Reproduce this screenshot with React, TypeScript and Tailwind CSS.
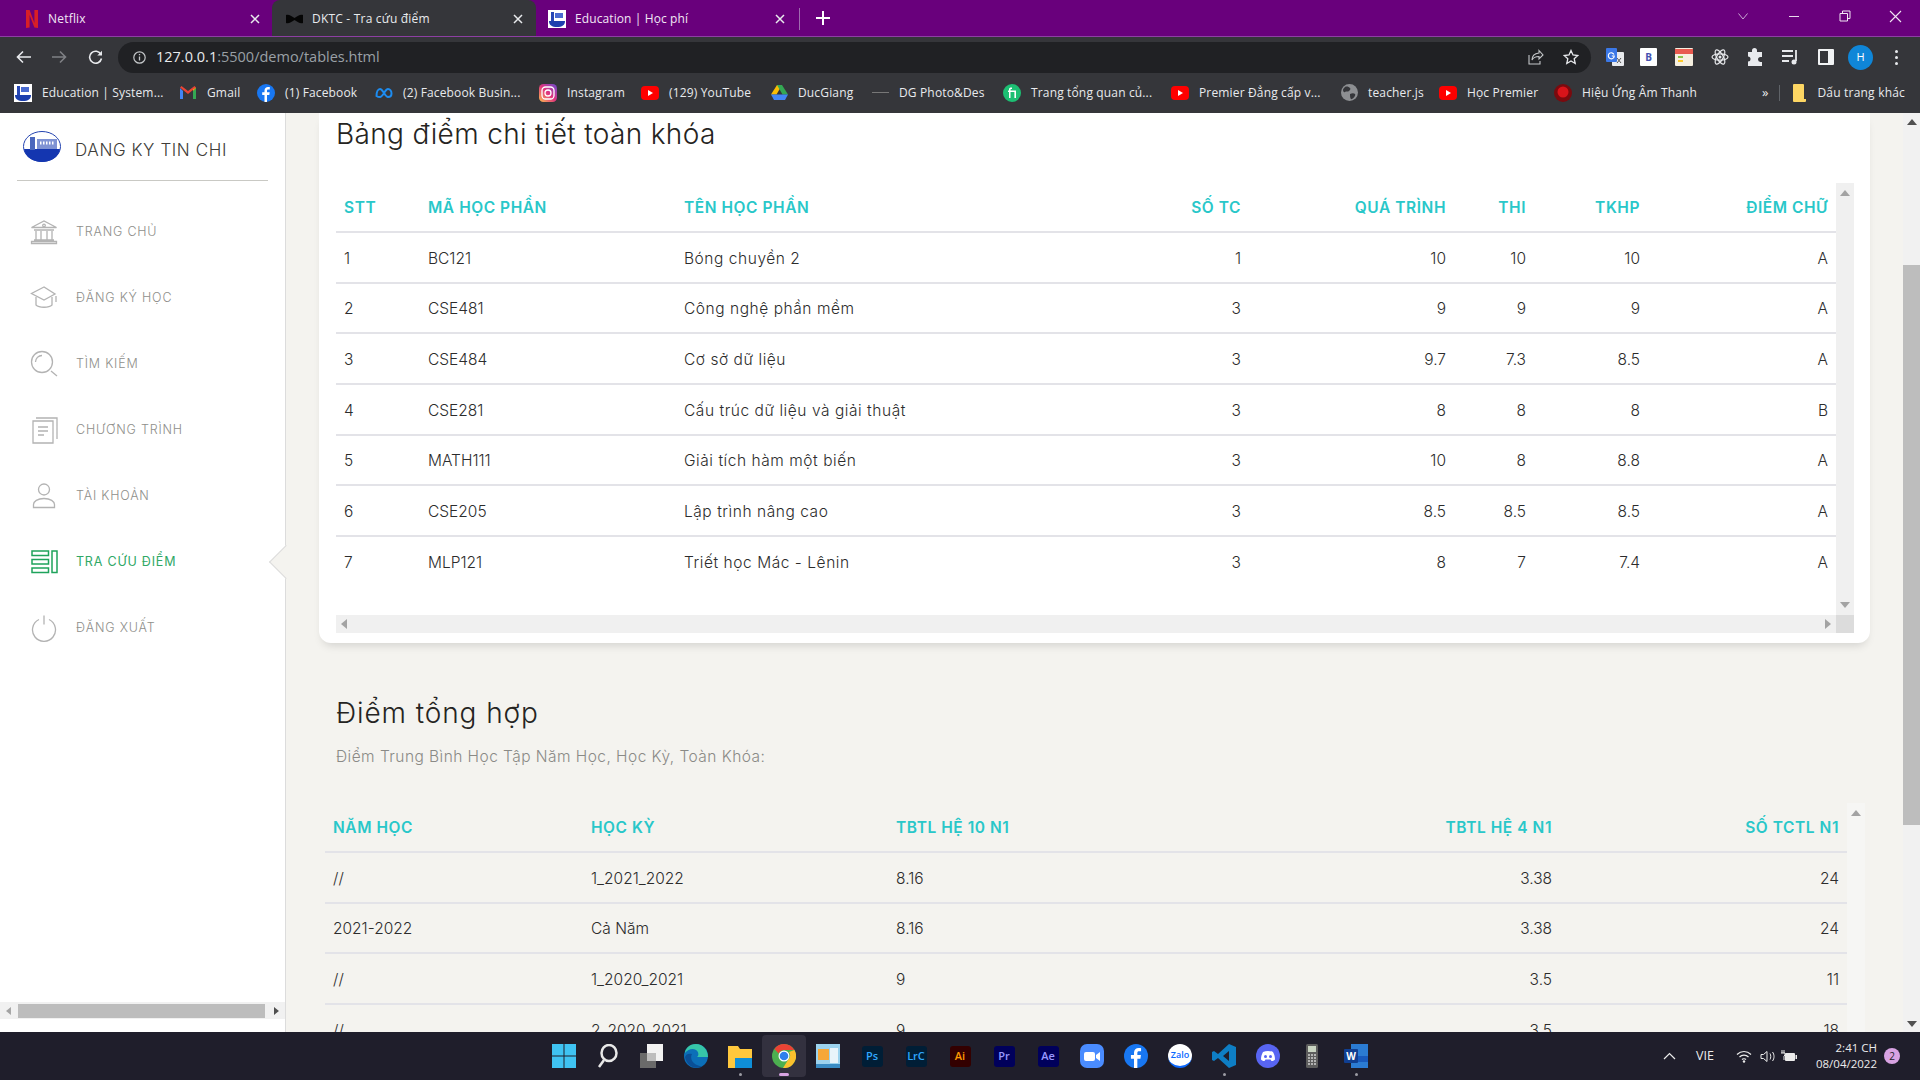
import React from "react";

const UI_FONT = "font-['Open_Sans','Noto_Sans',sans-serif]";
const PAGE_FONT = "font-['Inter','Noto_Sans',sans-serif]";

// --- small drawn icons ---
const NetflixIcon = () => (
  <svg width="12" height="18" viewBox="0 0 12 18">
    <path d="M0 0h3.6l4.8 13V0H12v18l-3.6-.6L3.6 5v12.6L0 18z" fill="#d81f26" />
  </svg>
);

const BowTieIcon = () => (
  <svg width="17" height="10" viewBox="0 0 17 10">
    <path d="M0 1c3-1 5 1 8.500 3C12 2 14 0 17 1v8c-3 1-5-1-8.500-3C5 8 3 10 0 9z" fill="#050505" />
  </svg>
);

const SchoolIcon = ({ size = 18 }: { size?: number }) => (
  <svg width={size} height={size} viewBox="0 0 18 18">
    <rect width="18" height="18" fill="#fff" />
    <rect x="3" y="2" width="3" height="9" fill="#2747b5" />
    <rect x="7" y="3" width="8" height="5" fill="#4a6bd0" />
    <path d="M1 11h16c0 4-3 6-8 6s-8-2-8-6z" fill="#1c3fae" />
  </svg>
);

const CloseX = ({ className = "" }: { className?: string }) => (
  <svg width="12" height="12" viewBox="0 0 12 12" className={className}>
    <path d="M2 2l8 8M10 2l-8 8" stroke="#e8eaed" strokeWidth="1.500" />
  </svg>
);

const GmailIcon = () => (
  <svg width="16" height="13" viewBox="0 0 16 13">
    <path d="M0 2v11h3V5z" fill="#4285f4" />
    <path d="M13 5v8h3V2z" fill="#34a853" />
    <path d="M0 1.500 8 8l8-6.500L14.500 0 8 5 1.500 0z" fill="#ea4335" />
    <path d="M13 3.500 16 1.500V2L13 5z" fill="#fbbc04" />
  </svg>
);

const FacebookIcon = ({ size = 18 }: { size?: number }) => (
  <svg width={size} height={size} viewBox="0 0 18 18">
    <circle cx="9" cy="9" r="9" fill="#1877f2" />
    <path d="M10 18v-7h2.300l.4-2.700H10V6.800c0-.8.3-1.300 1.400-1.300h1.400V3.100C12.400 3 11.700 3 11 3 9 3 7.500 4.200 7.500 6.500v1.800H5.200V11h2.300v7z" fill="#fff" />
  </svg>
);

const MetaIcon = () => (
  <svg width="18" height="12" viewBox="0 0 18 12" fill="none">
    <path d="M1.500 9c0-4 1.500-7 3.500-7 3 0 5 8 8 8 2 0 3.500-1 3.500-3.500C16.500 4 15 2 13 2c-3 0-5 8-8 8-2 0-3.500-1-3.500-1z" stroke="#1d8cf0" strokeWidth="2" />
  </svg>
);

const InstagramIcon = () => (
  <svg width="18" height="18" viewBox="0 0 18 18" fill="none">
    <defs>
      <linearGradient id="ig" x1="0" y1="1" x2="1" y2="0">
        <stop offset="0" stopColor="#fdc04f" />
        <stop offset="0.5" stopColor="#e0337d" />
        <stop offset="1" stopColor="#6a4bd2" />
      </linearGradient>
    </defs>
    <rect width="18" height="18" rx="4.500" fill="url(#ig)" />
    <rect x="3" y="3" width="12" height="12" rx="3.500" stroke="#fff" strokeWidth="1.300" />
    <circle cx="9" cy="9" r="3" stroke="#fff" strokeWidth="1.300" />
  </svg>
);

const YoutubeIcon = () => (
  <svg width="18" height="14" viewBox="0 0 18 14">
    <rect width="18" height="14" rx="4" fill="#f00" />
    <path d="M7 4l5 3-5 3z" fill="#fff" />
  </svg>
);

const DriveIcon = () => (
  <svg width="17" height="15" viewBox="0 0 17 15">
    <path d="M6 0h5l-5.500 9.500H0z" fill="#fbbc04" />
    <path d="M11 0l6 9.500h-5.500L6 0z" fill="#34a853" />
    <path d="M0 9.500 3 15h11l3-5.500z" fill="#4285f4" />
  </svg>
);

const FiverrIcon = () => (
  <svg width="18" height="18" viewBox="0 0 18 18">
    <circle cx="9" cy="9" r="9" fill="#1dbf73" />
    <path d="M6 14V8H5V6.500h1V5.500C6 4 7 3.500 8.500 3.500H9V5h-.5c-.7 0-1 .2-1 .8v.7H13V14h-1.600V8H7.500v6z" fill="#fff" />
  </svg>
);

const GlobeIcon = () => (
  <svg width="17" height="17" viewBox="0 0 17 17">
    <circle cx="8.500" cy="8.500" r="8.500" fill="#8d8f92" />
    <path d="M4 3c2-1 4 0 5 1s0 2-1 3-3 0-4 1-2-1-2-2 1-2 2-3zM9 10c2-1 4-1 5 0s-1 4-3 5-2-4-2-5z" fill="#35363a" />
  </svg>
);

const RedDiscIcon = () => (
  <svg width="18" height="18" viewBox="0 0 18 18">
    <circle cx="9" cy="9" r="9" fill="#7b0a0e" />
    <circle cx="9" cy="8" r="5.500" fill="#d8141a" />
  </svg>
);

const FolderIcon = () => (
  <svg width="13" height="18" viewBox="0 0 13 18">
    <path d="M0 1a1 1 0 011-1h9a1 1 0 011 1v14l2 0v2a1 1 0 01-1 1H1a1 1 0 01-1-1z" fill="#fdd663" />
  </svg>
);

// --- bookmarks ---
const BOOKMARKS = [
  { icon: <SchoolIcon />, label: "Education | System...", cls: "ml-[14px] w-[165px]" },
  { icon: <GmailIcon />, label: "Gmail", cls: "w-[78px]" },
  { icon: <FacebookIcon />, label: "(1) Facebook", cls: "w-[118px]" },
  { icon: <MetaIcon />, label: "(2) Facebook Busin...", cls: "w-[164px]" },
  { icon: <InstagramIcon />, label: "Instagram", cls: "w-[102px]" },
  { icon: <YoutubeIcon />, label: "(129) YouTube", cls: "w-[129px]" },
  { icon: <DriveIcon />, label: "DucGiang", cls: "w-[101px]" },
  { icon: <span className="block h-px w-[17px] bg-[#777]" />, label: "DG Photo&Des", cls: "w-[132px]" },
  { icon: <FiverrIcon />, label: "Trang tổng quan củ...", cls: "w-[168px]" },
  { icon: <YoutubeIcon />, label: "Premier Đẳng cấp v...", cls: "w-[169px]" },
  { icon: <GlobeIcon />, label: "teacher.js", cls: "w-[99px]" },
  { icon: <YoutubeIcon />, label: "Học Premier", cls: "w-[115px]" },
  { icon: <RedDiscIcon />, label: "Hiệu Ứng Âm Thanh", cls: "w-[208px]" },
];

const Bookmark = ({ icon, label, cls }: { icon: React.ReactNode; label: string; cls: string }) => (
  <div className={`flex shrink-0 items-center ${cls}`}>
    <div className="flex w-[18px] shrink-0 justify-center">{icon}</div>
    <span className="ml-[10px] whitespace-nowrap text-[12px] tracking-[0.15px] text-[#e8eaed]">{label}</span>
  </div>
);

// --- browser chrome ---
const TabBar = () => (
  <div className={`flex h-[37px] items-end border-b border-[#8d3fa3] bg-[#69007c] ${UI_FONT}`}>
    <div className="flex h-[36px] w-[272px] items-center pl-[26px] pt-[1px]">
      <NetflixIcon />
      <span className="ml-[10px] text-[12px] tracking-[0.2px] text-[#f1e6f4]">Netflix</span>
      <CloseX className="ml-auto mr-[11px]" />
    </div>
    <div className="flex h-[36px] w-[264px] items-center rounded-t-[8px] bg-[#35363a] pl-[14px] pt-[1px]">
      <BowTieIcon />
      <span className="ml-[9px] text-[12px] tracking-[0.2px] text-[#e8eaed]">DKTC - Tra cứu điểm</span>
      <CloseX className="ml-auto mr-[12px]" />
    </div>
    <div className="flex h-[36px] w-[264px] items-center pl-[12px] pt-[1px]">
      <SchoolIcon />
      <span className="ml-[9px] text-[12px] tracking-[0.1px] text-[#f1e6f4]">Education | Học phí</span>
      <CloseX className="ml-auto mr-[13px]" />
      <div className="h-[22px] w-px bg-[#a06cb0]" />
    </div>
    <div className="flex h-[36px] items-center pl-[16px]">
      <svg width="14" height="14" viewBox="0 0 14 14">
        <path d="M7 0v14M0 7h14" stroke="#fff" strokeWidth="2" />
      </svg>
    </div>
    <div className="ml-auto flex h-[36px] items-center pb-[4px]">
      <svg width="10" height="7" viewBox="0 0 10 7" fill="none">
        <path d="M.5.500 5 6 9.500.500" stroke="#c9a6d2" />
      </svg>
      <div className="ml-[41px] h-px w-[10px] bg-[#e8d8ec]" />
      <svg width="12" height="12" viewBox="0 0 12 12" fill="none" className="ml-[40px]">
        <path d="M1 3.500h7.500V11H1zM3.500 3.500V1H11v7.500H8.500" stroke="#f1e6f4" />
      </svg>
      <svg width="13" height="13" viewBox="0 0 13 13" className="ml-[38px] mr-[18px]">
        <path d="M1 1l11 11M12 1 1 12" stroke="#f1e6f4" strokeWidth="1.100" />
      </svg>
    </div>
  </div>
);

const ToolbarGlyph = ({ children, cls }: { children: React.ReactNode; cls: string }) => (
  <div className={`flex shrink-0 items-center justify-center ${cls}`}>{children}</div>
);

const Toolbar = () => (
  <div className={`flex h-[40px] items-center bg-[#35363a] ${UI_FONT}`}>
    <ToolbarGlyph cls="w-[46px] pl-[1px]">
      <svg width="16" height="14" viewBox="0 0 16 14" fill="none">
        <path d="M15 7H2M7 1.500 1.500 7 7 12.500" stroke="#e8eaed" strokeWidth="1.600" />
      </svg>
    </ToolbarGlyph>
    <ToolbarGlyph cls="w-[26px]">
      <svg width="16" height="14" viewBox="0 0 16 14" fill="none">
        <path d="M1 7h13M9 1.500 14.500 7 9 12.500" stroke="#7f8185" strokeWidth="1.600" />
      </svg>
    </ToolbarGlyph>
    <ToolbarGlyph cls="w-[46px]">
      <svg width="15" height="15" viewBox="0 0 15 15" fill="none">
        <path d="M13 4.500A6 6 0 1 0 13.500 8.500" stroke="#e8eaed" strokeWidth="1.600" />
        <path d="M14 .800V5.500H9.300z" fill="#e8eaed" />
      </svg>
    </ToolbarGlyph>
    <div className="flex h-[31px] w-[1473px] shrink-0 items-center rounded-full bg-[#202124] pl-[15px]">
      <svg width="13" height="13" viewBox="0 0 13 13" fill="none">
        <circle cx="6.500" cy="6.500" r="5.700" stroke="#c4c7c9" strokeWidth="1.200" />
        <path d="M6.500 5.500v4M6.500 3v1.300" stroke="#c4c7c9" strokeWidth="1.300" />
      </svg>
      <span className="ml-[10px] text-[14.500px] tracking-[0px] text-[#e8eaed]">
        127.0.0.1<span className="text-[#9aa0a6]">:5500/demo/tables.html</span>
      </span>
      <svg width="16" height="16" viewBox="0 0 16 16" fill="none" className="ml-auto">
        <path d="M11 1.500 15 6l-4 4V7.500C7 7.500 5 9 4 11c0-4 3-6.500 7-7zM1 6v9h11v-3" stroke="#c4c7c9" strokeWidth="1.100" />
      </svg>
      <svg width="16" height="16" viewBox="0 0 16 16" fill="none" className="ml-[19px] mr-[12px]">
        <path d="M8 1.500 10 6l4.800.5-3.600 3.200 1 4.800L8 12l-4.200 2.500 1-4.800L1.200 6.500 6 6z" stroke="#e8eaed" strokeWidth="1.300" />
      </svg>
    </div>
    <div className="ml-[15px] flex items-center">
      {/* translate */}
      <svg width="18" height="18" viewBox="0 0 18 18" className="shrink-0">
        <rect x="6" y="4" width="12" height="14" rx="1" fill="#e8eaed" />
        <rect width="11" height="14" rx="1" fill="#3b78e7" />
        <path d="M8 6.500A3 3 0 1 0 8.300 8H5.800" stroke="#fff" strokeWidth="1.100" fill="none" />
        <path d="M11 10l4 5M15 10l-4 5" stroke="#555" strokeWidth="1" />
      </svg>
      {/* B page */}
      <div className="ml-[16px] flex h-[18px] w-[17px] shrink-0 items-center justify-center rounded-[1px] bg-white text-[10px] font-bold text-[#4450b0]">B</div>
      {/* note */}
      <svg width="18" height="18" viewBox="0 0 18 18" className="ml-[18px] shrink-0">
        <rect width="18" height="18" rx="1" fill="#f6efe0" />
        <rect width="18" height="5" y="1" fill="#e85a4f" />
        <rect x="3" y="8" width="5" height="2" fill="#8bc34a" />
        <rect x="3" y="12" width="5" height="2" fill="#ffca28" />
      </svg>
      {/* atom */}
      <svg width="18" height="18" viewBox="0 0 18 18" fill="none" className="ml-[18px] shrink-0">
        <g stroke="#e8eaed" strokeWidth="1.200">
          <ellipse cx="9" cy="9" rx="8" ry="3.200" />
          <ellipse cx="9" cy="9" rx="8" ry="3.200" transform="rotate(60 9 9)" />
          <ellipse cx="9" cy="9" rx="8" ry="3.200" transform="rotate(120 9 9)" />
        </g>
        <circle cx="9" cy="9" r="1.500" fill="#e8eaed" />
      </svg>
      {/* puzzle */}
      <svg width="18" height="18" viewBox="0 0 18 18" className="ml-[17px] shrink-0">
        <path d="M6 2.500a2.500 2.500 0 015 0V4h5v5h-1.500a2.500 2.500 0 000 5H16v4H2v-4.500a2.500 2.500 0 000-5V4h4z" fill="#e8eaed" />
      </svg>
      {/* playlist */}
      <svg width="18" height="16" viewBox="0 0 18 16" fill="none" className="ml-[18px] shrink-0">
        <path d="M0 2h11M0 7h11M0 12h7" stroke="#e8eaed" strokeWidth="1.800" />
        <path d="M14 1v11" stroke="#e8eaed" strokeWidth="1.800" />
        <circle cx="12" cy="13" r="2.500" fill="#e8eaed" />
      </svg>
      {/* side panel */}
      <div className="ml-[18px] h-[16px] w-[16px] shrink-0 rounded-[1px] border-[2px] border-r-[6px] border-[#f1f3f4]" />
      <div className="ml-[14px] flex h-[25px] w-[25px] shrink-0 items-center justify-center rounded-full bg-[#0f86d8] text-[11px] text-white">H</div>
      <div className="ml-[22px] flex shrink-0 flex-col gap-[3px]">
        <span className="block h-[3px] w-[3px] rounded-full bg-[#e8eaed]" />
        <span className="block h-[3px] w-[3px] rounded-full bg-[#e8eaed]" />
        <span className="block h-[3px] w-[3px] rounded-full bg-[#e8eaed]" />
      </div>
    </div>
  </div>
);

const BookmarkBar = () => (
  <div className={`flex h-[36px] items-center bg-[#35363a] pb-[5px] ${UI_FONT}`}>
    {BOOKMARKS.map((b) => (
      <Bookmark key={b.label} {...b} />
    ))}
    <span className="text-[13px] text-[#e8eaed]">»</span>
    <div className="ml-[11px] h-[16px] w-px bg-[#5f6368]" />
    <div className="ml-[13px] flex items-center">
      <FolderIcon />
      <span className="ml-[11px] whitespace-nowrap text-[12px] tracking-[0.2px] text-[#e8eaed]">Dấu trang khác</span>
    </div>
  </div>
);

// --- sidebar ---
const iconCls = "h-[28px] w-[28px] shrink-0 fill-none stroke-[#b3b3b3] stroke-[1.3]";

const NAV = [
  {
    label: "TRANG CHỦ",
    icon: (
      <svg viewBox="0 0 28 28" className={iconCls}>
        <path d="M1.500 9.500 14 3l12.500 6.500zM4 12h20M4 22h20M1.500 25.500h25v-2h-25zM6 13v9M11 13v9M17 13v9M22 13v9" />
        <circle cx="14" cy="7.500" r="1.300" />
      </svg>
    ),
  },
  {
    label: "ĐĂNG KÝ HỌC",
    icon: (
      <svg viewBox="0 0 28 28" className={iconCls}>
        <path d="M14 3 1.500 9.500 14 16l11-6zM6 13v8c3 3 13 3 16 0v-8M26 12v6" />
      </svg>
    ),
  },
  {
    label: "TÌM KIẾM",
    icon: (
      <svg viewBox="0 0 28 28" className={iconCls}>
        <circle cx="12" cy="12" r="10.500" />
        <path d="M5.500 12a6.500 6.500 0 016.500-6.500M21 21l6 5" />
      </svg>
    ),
  },
  {
    label: "CHƯƠNG TRÌNH",
    icon: (
      <svg viewBox="0 0 28 28" className={iconCls}>
        <path d="M3 5h20v22H3zM6 2h21v21M8 11h10M8 15h10M8 19h6" />
      </svg>
    ),
  },
  {
    label: "TÀI KHOẢN",
    icon: (
      <svg viewBox="0 0 28 28" className={iconCls}>
        <circle cx="14" cy="7.500" r="5.500" />
        <path d="M3.500 25.500v-3c0-3 4-6 10.500-6s10.500 3 10.500 6v3z" />
      </svg>
    ),
  },
  {
    label: "TRA CỨU ĐIỂM",
    active: true,
    icon: (
      <svg viewBox="0 0 28 28" className="h-[28px] w-[28px] shrink-0 fill-none stroke-[#1fa35b] stroke-[1.5]">
        <path d="M2 3h16.500v4.500H2zM2 11.500h16.500v4.500H2zM2 20h16.500v4.500H2zM22 3h5v21.500h-5z" />
      </svg>
    ),
  },
  {
    label: "ĐĂNG XUẤT",
    icon: (
      <svg viewBox="0 0 28 28" className={iconCls}>
        <path d="M9 5.500a11.500 11.500 0 1010 0M14 1.500v9" />
      </svg>
    ),
  },
];

const Sidebar = () => (
  <aside className={`relative flex w-[286px] shrink-0 flex-col border-r border-[#dcdcdc] bg-white ${PAGE_FONT}`}>
    <div className="mx-[17px] flex h-[68px] items-center border-b border-[#c9c9c4] pl-[6px]">
      <svg width="38" height="31" viewBox="0 0 38 31">
        <ellipse cx="19" cy="15.500" rx="18.500" ry="15" fill="#fff" stroke="#2343b0" strokeWidth="1" />
        <path d="M1 18h36c-1 8-9 13-18 13S2 26 1 18z" fill="#1436b0" />
        <rect x="7" y="6" width="5" height="13" fill="#4b67bd" />
        <rect x="14" y="8" width="20" height="10" fill="#7f93d4" />
        <path d="M17 12h14" stroke="#fff" strokeDasharray="1.500 1.500" strokeWidth="3" />
      </svg>
      <span className="ml-[14px] mt-[8px] whitespace-nowrap text-[17px] font-light tracking-[0.6px] text-[#403d39]">DANG KY TIN CHI</span>
    </div>
    <nav className="flex flex-col pt-[18px]">
      {NAV.map((item) => (
        <div key={item.label} className="relative flex h-[66px] items-center pl-[30px]">
          {item.icon}
          <span className={`ml-[18px] text-[12.500px] font-light tracking-[0.8px] ${item.active ? "font-normal text-[#2fa866]" : "text-[#8f8f8b]"}`}>
            {item.label}
          </span>
          {item.active && (
            <div className="absolute right-[-1px] top-1/2 h-[24px] w-[24px] -translate-y-1/2 translate-x-[12px] rotate-45 border-b border-l border-[#dcdcdc] bg-[#f4f3ef]" />
          )}
        </div>
      ))}
    </nav>
    {/* sidebar horizontal scrollbar */}
    <div className="mt-auto mb-[13px] flex h-[17px] items-center bg-[#f1f1f1]">
      <svg width="18" height="10" viewBox="0 0 18 10"><path d="M11 1v8L6 5z" fill="#a3a3a3" /></svg>
      <div className="h-[14px] w-[248px] bg-[#bdbdbd]" />
      <svg width="20" height="10" viewBox="0 0 20 10"><path d="M9 1v8l5-4z" fill="#505050" /></svg>
    </div>
  </aside>
);

// --- tables ---
const GRADES = [
  ["1", "BC121", "Bóng chuyền 2", "1", "10", "10", "10", "A"],
  ["2", "CSE481", "Công nghệ phần mềm", "3", "9", "9", "9", "A"],
  ["3", "CSE484", "Cơ sở dữ liệu", "3", "9.7", "7.3", "8.5", "A"],
  ["4", "CSE281", "Cấu trúc dữ liệu và giải thuật", "3", "8", "8", "8", "B"],
  ["5", "MATH111", "Giải tích hàm một biến", "3", "10", "8", "8.8", "A"],
  ["6", "CSE205", "Lập trình nâng cao", "3", "8.5", "8.5", "8.5", "A"],
  ["7", "MLP121", "Triết học Mác - Lênin", "3", "8", "7", "7.4", "A"],
];

const SUMMARY = [
  ["//", "1_2021_2022", "8.16", "3.38", "24"],
  ["2021-2022", "Cả Năm", "8.16", "3.38", "24"],
  ["//", "1_2020_2021", "9", "3.5", "11"],
  ["//", "2_2020_2021", "9", "3.5", "18"],
];

const thCls = "h-[49px] whitespace-nowrap px-2 pt-[1px] align-middle text-[15.500px] font-semibold tracking-[0.55px] text-[#29c7c9] border-b-2 border-[#e3e3e8]";
const tdCls = "h-[50.670px] whitespace-nowrap px-2 pt-[2px] align-middle text-[15.500px] font-light text-[#2c2c2c]";

const ArrowUp = ({ cls = "fill-[#a3a3a3]" }: { cls?: string }) => (
  <svg width="10" height="6" viewBox="0 0 10 6" className={cls}><path d="M0 6 5 0l5 6z" /></svg>
);
const ArrowDown = ({ cls = "fill-[#a3a3a3]" }: { cls?: string }) => (
  <svg width="10" height="6" viewBox="0 0 10 6" className={cls}><path d="M0 0l5 6 5-6z" /></svg>
);

const GradeCard = () => (
  <section className="rounded-b-[12px] bg-white pl-[17px] pr-[16px] pb-[10px] shadow-[0_6px_10px_-4px_rgba(0,0,0,0.15)]">
    <h2 className="pt-[2px] h-[70px] text-[28px] font-light leading-[38px] tracking-[0.35px] text-[#252422]">Bảng điểm chi tiết toàn khóa</h2>
    <div className="grid grid-cols-[1500px_18px] grid-rows-[432px_18px]">
      <table className="w-[1500px] table-fixed self-start border-collapse">
        <colgroup>
          <col className="w-[84px]" />
          <col className="w-[256px]" />
          <col className="w-[400px]" />
          <col className="w-[173px]" />
          <col className="w-[205px]" />
          <col className="w-[80px]" />
          <col className="w-[114px]" />
          <col className="w-[188px]" />
        </colgroup>
        <thead>
          <tr>
            <th className={`${thCls} text-left`}>STT</th>
            <th className={`${thCls} text-left`}>MÃ HỌC PHẦN</th>
            <th className={`${thCls} text-left`}>TÊN HỌC PHẦN</th>
            <th className={`${thCls} text-right`}>SỐ TC</th>
            <th className={`${thCls} text-right`}>QUÁ TRÌNH</th>
            <th className={`${thCls} text-right`}>THI</th>
            <th className={`${thCls} text-right`}>TKHP</th>
            <th className={`${thCls} text-right`}>ĐIỂM CHỮ</th>
          </tr>
        </thead>
        <tbody>
          {GRADES.map((r, i) => (
            <tr key={r[0]} className={i < GRADES.length - 1 ? "border-b-2 border-[#e3e3e8]" : ""}>
              {r.map((c, j) => (
                <td key={j} className={`${tdCls} ${j === 2 ? "tracking-[0.55px]" : ""} ${j > 2 ? "text-right" : "text-left"}`}>
                  {c}
                </td>
              ))}
            </tr>
          ))}
        </tbody>
      </table>
      <div className="flex flex-col items-center justify-between bg-[#f0f0f0] py-[7px]">
        <ArrowUp />
        <ArrowDown />
      </div>
      <div className="flex items-center justify-between bg-[#f0f0f0] px-[5px]">
        <svg width="6" height="10" viewBox="0 0 6 10" className="fill-[#a3a3a3]"><path d="M6 0v10L0 5z" /></svg>
        <svg width="6" height="10" viewBox="0 0 6 10" className="fill-[#a3a3a3]"><path d="M0 0v10l6-5z" /></svg>
      </div>
      <div className="bg-[#dcdcdc]" />
    </div>
  </section>
);

const SummarySection = () => (
  <section className="ml-[6px] mt-[49px]">
    <div className="pl-[11px]">
      <h2 className="h-[42px] text-[28px] font-light leading-[42px] tracking-[0.9px] text-[#252422]">Điểm tổng hợp</h2>
      <p className="mt-[11px] h-[24px] text-[15.500px] font-light leading-[24px] tracking-[0.45px] text-[#8a8a86]">
        Điểm Trung Bình Học Tập Năm Học, Học Kỳ, Toàn Khóa:
      </p>
    </div>
    <div className="mt-[34px] grid grid-cols-[1522px_18px]">
      <table className="w-[1522px] table-fixed self-start border-collapse">
        <colgroup>
          <col className="w-[258px]" />
          <col className="w-[305px]" />
          <col className="w-[300px]" />
          <col className="w-[372px]" />
          <col className="w-[287px]" />
        </colgroup>
        <thead>
          <tr>
            <th className={`${thCls} text-left`}>NĂM HỌC</th>
            <th className={`${thCls} text-left`}>HỌC KỲ</th>
            <th className={`${thCls} text-left`}>TBTL HỆ 10 N1</th>
            <th className={`${thCls} text-right`}>TBTL HỆ 4 N1</th>
            <th className={`${thCls} text-right`}>SỐ TCTL N1</th>
          </tr>
        </thead>
        <tbody>
          {SUMMARY.map((r, i) => (
            <tr key={i} className="border-b-2 border-[#e3e3e8]">
              {r.map((c, j) => (
                <td key={j} className={`${tdCls} ${j > 2 ? "text-right" : "text-left"}`}>
                  {c}
                </td>
              ))}
            </tr>
          ))}
        </tbody>
      </table>
      <div className="flex flex-col items-center bg-[#f6f6f4] pt-[7px]">
        <ArrowUp />
      </div>
    </div>
  </section>
);

const PageScrollbar = () => (
  <div className="flex w-[17px] shrink-0 flex-col items-center bg-[#f1f1f1]">
    <div className="flex h-[17px] w-full items-center justify-center">
      <ArrowUp cls="fill-[#505050]" />
    </div>
    <div className="mt-[135px] h-[560px] w-full bg-[#bdbdbd]" />
    <div className="mt-auto flex h-[17px] w-full items-center justify-center">
      <ArrowDown cls="fill-[#505050]" />
    </div>
  </div>
);

// --- taskbar ---
const Tile = ({ bg, fg, text }: { bg: string; fg: string; text: string }) => (
  <div className={`flex h-[21px] w-[21px] items-center justify-center rounded-[3px] text-[11px] font-semibold ${bg} ${fg}`}>{text}</div>
);

const TASK_ICONS: { key: string; node: React.ReactNode; dot?: boolean; active?: boolean }[] = [
  {
    key: "win",
    node: (
      <svg width="24" height="24" viewBox="0 0 24 24" className="fill-[#3fc3f2]">
        <rect width="11.500" height="11.500" />
        <rect x="12.500" width="11.500" height="11.500" />
        <rect y="12.500" width="11.500" height="11.500" />
        <rect x="12.500" y="12.500" width="11.500" height="11.500" />
      </svg>
    ),
  },
  {
    key: "search",
    node: (
      <svg width="22" height="24" viewBox="0 0 22 24" fill="none">
        <ellipse cx="12" cy="9" rx="7.500" ry="8" stroke="#e8e8e8" strokeWidth="2.500" />
        <path d="M7 16 2 23" stroke="#e8e8e8" strokeWidth="2.500" />
      </svg>
    ),
  },
  {
    key: "view",
    node: (
      <svg width="24" height="24" viewBox="0 0 24 24">
        <rect x="0" y="9" width="16" height="15" fill="#6a6a6a" />
        <rect x="7" y="0" width="16" height="17" fill="#f2f2f2" />
        <rect x="7" y="9" width="9" height="8" fill="#bdbdbd" />
      </svg>
    ),
  },
  {
    key: "edge",
    node: (
      <svg width="24" height="24" viewBox="0 0 24 24">
        <circle cx="12" cy="12" r="12" fill="#0c6fb8" />
        <path d="M24 13c0-7-5-13-12-13S1 5 1 9c3-4 8-5 11-3s3 6 1 7h11z" fill="#37c6a8" />
        <path d="M8 10c-3 5 2 12 10 12-6 4-15 1-17-9 1-3 4-4 7-3z" fill="#0a4f96" />
      </svg>
    ),
  },
  {
    key: "files",
    dot: true,
    node: (
      <svg width="24" height="24" viewBox="0 0 24 24">
        <path d="M0 2h10l2 3h12v19H0z" fill="#ffc83d" />
        <rect x="7" y="14" width="17" height="10" fill="#0f8fd8" />
      </svg>
    ),
  },
  {
    key: "chrome",
    active: true,
    node: (
      <svg width="24" height="24" viewBox="0 0 24 24">
        <circle cx="12" cy="12" r="12" fill="#4caf50" />
        <path d="M12 0a12 12 0 0110.400 6H12a6 6 0 00-5.400 3.500L2.400 5A12 12 0 0112 0z" fill="#ea4335" />
        <path d="M22.400 6A12 12 0 0111 24l5.300-8.500A6 6 0 0017 8z" fill="#fbc02d" />
        <circle cx="12" cy="12" r="5.500" fill="#fff" />
        <circle cx="12" cy="12" r="4.300" fill="#2f80ed" />
      </svg>
    ),
  },
  {
    key: "monitor",
    node: (
      <svg width="24" height="24" viewBox="0 0 24 24">
        <rect width="24" height="24" fill="#9cd3ee" />
        <rect x="2" y="5" width="11" height="11" fill="#f7a738" />
        <rect x="14" y="4" width="8" height="15" fill="#e9f4fa" />
        <rect y="20" width="24" height="4" fill="#3a8cc4" />
      </svg>
    ),
  },
  { key: "ps", node: <Tile bg="bg-[#001e36]" fg="text-[#31a8ff]" text="Ps" /> },
  { key: "lrc", node: <Tile bg="bg-[#001e36]" fg="text-[#31a8ff]" text="LrC" /> },
  { key: "ai", node: <Tile bg="bg-[#330000]" fg="text-[#ff9a00]" text="Ai" /> },
  { key: "pr", node: <Tile bg="bg-[#00005b]" fg="text-[#9999ff]" text="Pr" /> },
  { key: "ae", node: <Tile bg="bg-[#00005b]" fg="text-[#9999ff]" text="Ae" /> },
  {
    key: "zoom",
    node: (
      <svg width="24" height="24" viewBox="0 0 24 24">
        <rect width="24" height="24" rx="7" fill="#4a8cff" />
        <rect x="4" y="8" width="11" height="9" rx="2" fill="#fff" />
        <path d="M16 11l4-3v9l-4-3z" fill="#fff" />
      </svg>
    ),
  },
  { key: "fb", node: <FacebookIcon size={24} /> },
  {
    key: "zalo",
    node: (
      <div className="flex h-[24px] w-[24px] items-center justify-center rounded-full border-b-[2px] border-[#0a68ff] bg-white text-[9px] font-semibold text-[#0a68ff]">Zalo</div>
    ),
  },
  {
    key: "code",
    dot: true,
    node: (
      <svg width="24" height="24" viewBox="0 0 24 24">
        <path d="M17 0l7 3v18l-7 3L6 14l-4 3-2-1V8l2-1 4 3zM17 7l-6 5 6 5z" fill="#0e7ec4" />
      </svg>
    ),
  },
  {
    key: "discord",
    node: (
      <svg width="24" height="24" viewBox="0 0 24 24">
        <circle cx="12" cy="12" r="12" fill="#5865f2" />
        <path d="M7 8c3-1.500 7-1.500 10 0 1.500 2.500 2 5 2 7.500-1 1-2.500 1.500-3.500 1.500l-1-1.500h-5l-1 1.500C7.500 17 6 16.500 5 15.500 5 13 5.500 10.500 7 8z" fill="#fff" />
        <circle cx="9.500" cy="12.500" r="1.500" fill="#5865f2" />
        <circle cx="14.500" cy="12.500" r="1.500" fill="#5865f2" />
      </svg>
    ),
  },
  {
    key: "calc",
    node: (
      <svg width="12" height="24" viewBox="0 0 12 24">
        <rect width="12" height="24" rx="1.500" fill="#5d5d5d" />
        <rect x="2" y="2" width="8" height="6" fill="#c9d4c2" />
        <path d="M2 11h8M2 14h8M2 17h8M2 20h8" stroke="#cfcfcf" strokeWidth="1.500" strokeDasharray="2 1" />
      </svg>
    ),
  },
  {
    key: "word",
    dot: true,
    node: (
      <svg width="24" height="24" viewBox="0 0 24 24">
        <path d="M7 0h17v24H7z" fill="#2b7cd3" />
        <path d="M7 12h17v6H7z" fill="#185abd" />
        <rect y="5" width="14" height="14" rx="1" fill="#103f91" />
        <text x="7" y="16" textAnchor="middle" fontSize="10" fontWeight="700" fill="#fff" fontFamily="Open Sans">W</text>
      </svg>
    ),
  },
];

const Taskbar = () => (
  <footer className={`relative flex h-[48px] shrink-0 items-center justify-center bg-[#1f1e2b] ${UI_FONT}`}>
    {TASK_ICONS.map((t) => (
      <div key={t.key} className={`relative flex h-[42px] w-[44px] items-center justify-center rounded-[4px] ${t.active ? "bg-[#33313f]" : ""}`}>
        {t.node}
        {t.dot && <span className="absolute bottom-[1px] h-[3px] w-[3px] rounded-full bg-[#9c9ca3]" />}
        {t.active && <span className="absolute bottom-[1px] h-[3px] w-[10px] rounded-full bg-[#d8a3e3]" />}
      </div>
    ))}
    <div className="absolute right-0 top-0 flex h-full items-center text-[#ececec]">
      <svg width="13" height="8" viewBox="0 0 13 8" fill="none">
        <path d="M1 7l5.500-5.500L12 7" stroke="#ececec" strokeWidth="1.200" />
      </svg>
      <span className="ml-[20px] text-[12.500px]">VIE</span>
      <svg width="16" height="13" viewBox="0 0 16 13" fill="none" className="ml-[22px]">
        <path d="M1 4.500c4-4 10-4 14 0M3.500 7c2.500-2.500 6.500-2.500 9 0M6 9.500c1-1 3-1 4 0" stroke="#ececec" strokeWidth="1.200" />
        <circle cx="8" cy="11.500" r="1.200" fill="#ececec" />
      </svg>
      <svg width="16" height="13" viewBox="0 0 16 13" fill="none" className="ml-[8px]">
        <path d="M1 4.500h2.500L7 1.500v10l-3.500-3H1zM10 3.500c1 1.500 1 4.500 0 6M12.500 2c2 2.500 2 6.500 0 9" stroke="#ececec" />
      </svg>
      <svg width="16" height="12" viewBox="0 0 16 12" className="ml-[5px]">
        <rect x="4" y="3" width="10" height="8" rx="1" fill="#ececec" />
        <rect x="14.500" y="5" width="1.500" height="4" fill="#ececec" />
        <path d="M1 0v3M3 0v3M0 3h4v2l-1 1v4" stroke="#ececec" fill="none" />
      </svg>
      <div className="ml-[9px] flex w-[71px] flex-col items-end text-[11.500px] leading-[16px]">
        <span>2:41 CH</span>
        <span>08/04/2022</span>
      </div>
      <div className="ml-[7px] mr-[20px] flex h-[16px] w-[16px] items-center justify-center rounded-full bg-[#d8a3e3] text-[10px] text-[#1f1e2b]">2</div>
    </div>
  </footer>
);

export default function App() {
  return (
    <div className="flex h-screen w-full flex-col overflow-hidden bg-[#35363a]">
      <TabBar />
      <Toolbar />
      <BookmarkBar />
      <main className="flex min-h-0 flex-1 overflow-hidden bg-[#f4f3ef]">
        <Sidebar />
        <div className={`min-w-0 flex-1 overflow-hidden px-[33px] ${PAGE_FONT}`}>
          <GradeCard />
          <SummarySection />
        </div>
        <PageScrollbar />
      </main>
      <Taskbar />
    </div>
  );
}
